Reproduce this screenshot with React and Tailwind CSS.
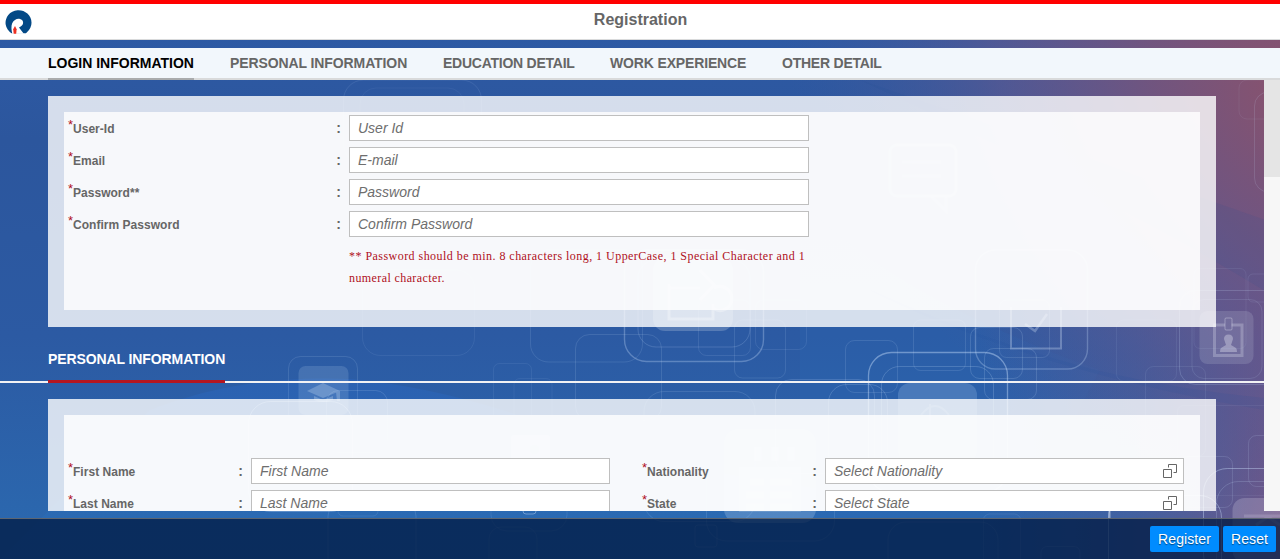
const tabs = [
  { name: 'LOGIN INFORMATION', width: 'w-[146px]' },
  { name: 'PERSONAL INFORMATION', width: 'w-[177px] tracking-[-0.1px]' },
  { name: 'EDUCATION DETAIL', width: 'w-[131px] tracking-[-0.25px]' },
  { name: 'WORK EXPERIENCE', width: 'w-[136px] tracking-[-0.15px]' },
  { name: 'OTHER DETAIL', width: 'w-[100px] tracking-[-0.23px]' },
];

const loginFields = [
  ['User-Id', 'User Id'],
  ['Email', 'E-mail'],
  ['Password**', 'Password'],
  ['Confirm Password', 'Confirm Password'],
];

function Box({ x, y, w, h, r = 10, o = 0.12, sw = 1 }) {
  return <rect x={x} y={y} width={w} height={h} rx={r} fill="none" stroke="#cfe4ff" strokeOpacity={o} strokeWidth={sw} />;
}

function Backdrop() {
  return (
    <svg className="absolute inset-0" width="1280" height="559" viewBox="0 0 1280 559" aria-hidden="true">
      <defs>
        <linearGradient id="base" x1="0" y1="0" x2="0" y2="1">
          <stop offset="0" stopColor="#2e5ba7" />
          <stop offset="0.25" stopColor="#2c569d" />
          <stop offset="0.6" stopColor="#2c5aa3" />
          <stop offset="0.93" stopColor="#2b67ae" />
          <stop offset="1" stopColor="#2b67ae" />
        </linearGradient>
        <radialGradient id="glow" gradientUnits="userSpaceOnUse" cx="0" cy="0" r="1" gradientTransform="translate(1310 90) rotate(28) scale(560 420)">
          <stop offset="0" stopColor="#8b526b" />
          <stop offset="0.3" stopColor="#75547c" stopOpacity="0.9" />
          <stop offset="0.6" stopColor="#5f588f" stopOpacity="0.65" />
          <stop offset="1" stopColor="#3f5a9c" stopOpacity="0" />
        </radialGradient>
        <linearGradient id="side" gradientUnits="userSpaceOnUse" x1="980" y1="0" x2="1290" y2="0">
          <stop offset="0" stopColor="#5a5a96" stopOpacity="0" />
          <stop offset="0.5" stopColor="#5a5a92" stopOpacity="0.5" />
          <stop offset="1" stopColor="#80547f" stopOpacity="0.9" />
        </linearGradient>
        <linearGradient id="wave" x1="0" y1="0" x2="0" y2="1">
          <stop offset="0" stopColor="#2b62b4" stopOpacity="0.85" />
          <stop offset="1" stopColor="#2b72ba" stopOpacity="0.3" />
        </linearGradient>
      </defs>
      <rect width="1280" height="559" fill="url(#base)" />
      <path d="M150 410Q240 374 350 379Q450 388 560 430T900 500L900 559L0 559Z" fill="url(#wave)" />
      <path d="M800 200Q900 300 1100 370L1000 559L800 559Z" fill="#2b68b4" fillOpacity="0.3" />
      <rect width="1280" height="559" fill="url(#side)" />
      <rect width="1280" height="559" fill="url(#glow)" />
      <path d="M860 80Q1050 145 1280 225L1280 300Q1100 190 860 80Z" fill="#1e4f98" fillOpacity="0.1" />
      <path d="M870 290Q980 340 1095 370Q1180 390 1264 398L1264 410Q1030 370 870 290Z" fill="#214f9c" fillOpacity="0.1" />

      <Box x="343.500" y="80" w="138" h="84" r="20" o="0.1" />
      <Box x="360" y="88" w="104" h="70" r="16" o="0.06" />
      <Box x="288.500" y="356.500" w="69" h="70" r="12" o="0.13" />
      <rect x="298.500" y="366" width="50" height="49" rx="7" fill="#a9c8e8" fillOpacity="0.2" />
      <path d="M307 391l16-8 17 8-17 7zM314 396v4q9 4 19 0v-4l-10 4zM336 392l4-1v10h-3z" fill="#cfe3f5" fillOpacity="0.28" />
      <Box x="248.500" y="401.500" w="104" h="110" r="22" o="0.3" />
      <Box x="326.500" y="390.500" w="61" h="62" r="12" o="0.15" />
      <Box x="362.500" y="270" w="112" h="85.500" r="18" o="0.08" />
      <Box x="530.500" y="250" w="112" h="112" r="18" o="0.12" />
      <Box x="575.500" y="334.500" w="86" h="86" r="14" o="0.13" />
      <Box x="624.500" y="250" w="139" h="111.500" r="22" o="0.3" sw={1.4} />
      <Box x="638" y="260" w="112" h="87" r="18" o="0.18" />
      <rect x="653" y="258" width="80" height="73" rx="12" fill="#fff" fillOpacity="0.2" />
      <path d="M669 284v35h44v-15M669 288h31M700 270l14 15-14 15M714 309a12 12 0 1 0 0-21" fill="none" stroke="#fff" strokeOpacity="0.3" strokeWidth="3" />
      <Box x="698.500" y="300" w="52" h="55.500" r="8" o="0.11" />
      <Box x="734.500" y="320" w="51" h="58" r="8" o="0.12" />
      <Box x="755.500" y="300" w="51" h="49.500" r="8" o="0.1" />
      <Box x="493.500" y="363.500" w="38" h="60" r="6" o="0.08" />
      <Box x="514" y="378.500" w="38" h="42" r="6" o="0.07" />
      <rect x="511" y="435" width="39" height="50" rx="2" fill="#fff" fillOpacity="0.25" />
      <circle cx="534.500" cy="449.500" r="4.500" fill="#2b62ae" fillOpacity="0.4" />
      <Box x="491" y="419" w="76" h="112" r="16" o="0.1" />
      <Box x="644" y="391.500" w="111" h="130" r="20" o="0.13" />
      <Box x="775.500" y="379.500" w="99" h="94" r="16" o="0.17" />
      <Box x="706.500" y="416" w="128" h="125" r="20" o="0.12" />
      <rect x="724" y="429" width="92" height="94" rx="14" fill="#c3ddf5" fillOpacity="0.25" />
      <path d="M739 467h62v45h-62z" fill="#fff" fillOpacity="0.14" />
      <path d="M750 482h14M770 482h22M746 495h18M770 495h22M746 507h18M770 507h22M758 447v14M775 447v14M791 447v14" stroke="#fff" strokeOpacity="0.2" strokeWidth="7" />
      <Box x="328" y="500" w="88" h="100" r="16" o="0.14" />
      <Box x="338" y="482" w="40" h="34" r="5" o="0.1" />
      <Box x="489" y="527" w="48" h="60" r="12" o="0.09" />
      <Box x="523" y="500" w="13" h="14" r="3" o="0.4" />
      <Box x="695" y="525" w="22" h="22" r="3" o="0.12" />

      <Box x="845.500" y="340.500" w="52" h="52" r="9" o="0.13" />
      <Box x="913.500" y="320" w="52" h="50.500" r="7" o="0.13" />
      <Box x="868.500" y="352.500" w="139" h="140" r="23" o="0.42" sw={1.3} />
      <Box x="881.500" y="366.500" w="112" h="114" r="18" o="0.2" />
      <Box x="828.500" y="384.500" w="59" h="90" r="18" o="0.19" />
      <rect x="898" y="383" width="79" height="80" rx="12" fill="#c5e2fa" fillOpacity="0.2" />
      <path d="M921 415q14-18 28 0M930 404v17" fill="none" stroke="#fff" strokeOpacity="0.15" strokeWidth="2" />
      <Box x="975.500" y="250" w="112" h="119" r="20" o="0.27" sw={1.4} />
      <Box x="970.500" y="327.500" w="52" h="51" r="9" o="0.16" />
      <Box x="984.500" y="348.500" w="52" h="51" r="9" o="0.16" />
      <Box x="999.500" y="300" w="50" h="57.500" r="7" o="0.13" />
      <path d="M1011 307v41.500h50V307" fill="none" stroke="#c9d9ef" strokeOpacity="0.34" strokeWidth="2" />
      <path d="M1025 324l10 7 12-17" fill="none" stroke="#c9d9ef" strokeOpacity="0.34" strokeWidth="2.500" />
      <rect x="890" y="145" width="66" height="51" rx="7" fill="none" stroke="#fff" strokeOpacity="0.2" strokeWidth="3" />
      <path d="M902 162h39M902 176h39M931 196l15 15v-15" stroke="#fff" strokeOpacity="0.14" strokeWidth="3" fill="none" />

      <rect x="1199.500" y="311" width="54" height="53" rx="8" fill="#ced1e5" fillOpacity="0.18" />
      <path d="M1225 325h-10.500v30.500h27.500V325h-10.500" fill="none" stroke="#dcddec" strokeOpacity="0.3" strokeWidth="3" />
      <rect x="1225" y="318" width="7" height="12" rx="1" fill="none" stroke="#dcddec" strokeOpacity="0.38" />
      <path d="M1224 339q0-4.500 4.500-4.500t4.500 4.500l-2 6 5 3q1 1 1 4h-17q0-3 1-4l5-3z" fill="#dcddec" fillOpacity="0.4" />
      <Box x="1179.500" y="290.500" w="110" h="94" r="16" o="0.19" />
      <Box x="1192" y="299.500" w="70" h="79" r="12" o="0.12" />
      <Box x="1145.500" y="366.500" w="60" h="90" r="8" o="0.09" />
      <Box x="1116.500" y="320" w="60" h="61" r="7" o="0.08" />
      <Box x="1239" y="80" w="52" h="39" r="8" o="0.07" />
      <Box x="1254.500" y="92" w="60" h="100" r="14" o="0.14" />
      <Box x="1194" y="268.500" w="52" h="80" r="6" o="0.08" />
      <Box x="1248" y="274" w="60" h="28" r="5" o="0.1" />
      <Box x="1177.500" y="405.500" w="100" h="90" r="6" o="0.07" />
      <Box x="1248.500" y="435.500" w="70" h="51" r="8" o="0.14" />
      <Box x="1180.500" y="456.500" w="52" h="51" r="8" o="0.14" />
      <Box x="1203.500" y="468.500" w="130" h="110" r="24" o="0.4" />
      <Box x="1216.500" y="481.500" w="130" h="110" r="22" o="0.18" />
      <Box x="1108.500" y="495.500" w="113" h="90" r="22" o="0.38" />
      <rect x="1232.500" y="498" width="65" height="65" rx="12" fill="#d2cfe4" fillOpacity="0.25" />
      <path d="M1244 516h36M1256 525l12-8 12 8" fill="none" stroke="#dcddec" strokeOpacity="0.2" strokeWidth="3" />
      <Box x="983.500" y="514" w="37" h="60" r="6" o="0.1" />
      <path d="M1109.500 511v8" stroke="#fff" strokeOpacity="0.45" strokeWidth="2" />
      <Box x="888" y="522" w="110" h="60" r="18" o="0.12" />
      <Box x="1041" y="546.500" w="39" h="30" r="6" o="0.12" />
    </svg>
  );
}

function Logo() {
  return (
    <svg className="block" width="29" height="26" viewBox="0 0 29 26" aria-label="Logo">
      <path d="M8.500 24.200A13 12.500 0 1 1 24.200 23L23 24.200Z" fill="#034986" />
      <path d="M9.300 24.800C8.400 21.500 8 17 9.200 14.300C10.800 10.900 14 9.300 17 10C20.300 10.800 21.100 14.400 18.900 16.600C18.200 17.400 17.300 17.900 16 18.500L20.800 24.800Z" fill="#fff" />
      <path d="M12 17L13.600 20.300L13.200 24.700H10.700L10.200 20.300Z" fill="#ed3022" />
    </svg>
  );
}

function ValueHelp() {
  return (
    <svg className="block shrink-0" width="15" height="15" viewBox="0 0 15 15" fill="none" stroke="#666" aria-hidden="true">
      <path d="M.500 5.500h8v8h-8zM5.500 3.500V.500h8v8H10.500" />
    </svg>
  );
}

function Field({ label, hint, labelWidth, inputWidth, help }) {
  return (
    <div className="flex h-8 items-center">
      <div className={`flex shrink-0 items-center justify-between pr-[8px] ${labelWidth}`}>
        <label className="flex pt-px text-[12px] leading-4 font-bold tracking-[0.03px] whitespace-nowrap text-[#666]">
          <span className="-mt-[4px] w-[5px] text-[13px] font-normal tracking-normal text-[#b0101c]">*</span>
          {label}
        </label>
        <span className="text-[14px] leading-4 font-bold text-[#666]">:</span>
      </div>
      <div className={`flex h-[26px] items-center border border-[#bfbfbf] bg-white pr-[5px] pl-2 ${inputWidth}`}>
        <input
          placeholder={hint}
          className="h-6 min-w-0 flex-1 bg-transparent text-[14px] text-[#333] outline-none placeholder:text-[#6e6e6e] placeholder:italic"
        />
        {help && <ValueHelp />}
      </div>
    </div>
  );
}

export default function App() {
  return (
    <div className="relative h-[559px] w-[1280px] overflow-hidden bg-[#2c589f] font-['Liberation_Sans',Arial,sans-serif]">
      <Backdrop />
      <div className="relative flex h-full flex-col">
        <header className="grid h-10 shrink-0 grid-cols-[1fr_auto_1fr] border-t-4 border-b border-t-[#ff0000] border-b-[#d9dadb] bg-white">
          <div className="pt-[5px] pl-[3px]"><Logo /></div>
          <h1 className="pt-[6px] pl-px text-[16px] leading-[20px] font-bold text-[#666]">Registration</h1>
        </header>

        <nav className="mt-2 flex h-8 shrink-0 gap-9 border-b-2 border-[#d9dadb] bg-[#f2f7fc] pl-12">
          {tabs.map((t, i) => (
            <button
              key={t.name}
              className={`-mb-0.5 h-8 shrink-0 border-b-2 text-left text-[14px] leading-[30px] font-bold whitespace-nowrap ${t.width} ${i === 0 ? 'border-[#a9abad] text-black' : 'border-transparent text-[#666]'}`}
            >
              {t.name}
            </button>
          ))}
        </nav>

        <div className="flex h-[431px] shrink-0 overflow-hidden">
          <main className="w-[1264px] pt-4">
            <section className="mr-12 ml-12 h-[231px] bg-white/80 px-4 pt-4 pb-[17px]">
              <div className="h-[198px] bg-white/80 pl-1">
                {loginFields.map(([label, hint]) => (
                  <Field key={label} label={label} hint={hint} labelWidth="w-[281px]" inputWidth="w-[460px]" />
                ))}
                <p className="mt-[5px] ml-[281px] w-[470px] font-['Liberation_Serif',serif] text-[12px] leading-[22px] whitespace-nowrap text-[#b0101c]">
                  <span className="tracking-[0.46px]">** Password should be min. 8 characters long, 1 UpperCase, 1 Special Character and 1</span>
                  <br />
                  <span className="tracking-[0.4px]">numeral character.</span>
                </p>
              </div>
            </section>

            <div className="mt-4 flex h-10 border-b-2 border-[#f2f2f4] pl-12">
              <h2 className="h-[40px] w-[177px] shrink-0 border-b-[3px] border-[#b51620] text-[14px] leading-[32px] font-bold tracking-[-0.1px] whitespace-nowrap text-white">
                PERSONAL INFORMATION
              </h2>
            </div>

            <section className="mx-12 mt-4 h-[240px] bg-white/80 px-4 pt-4">
              <div className="flex h-[224px] gap-8 bg-white/80 pt-10 pl-1">
                <div>
                  <Field label="First Name" hint="First Name" labelWidth="w-[183px]" inputWidth="w-[359px]" />
                  <Field label="Last Name" hint="Last Name" labelWidth="w-[183px]" inputWidth="w-[359px]" />
                </div>
                <div>
                  <Field label="Nationality" hint="Select Nationality" labelWidth="w-[183px]" inputWidth="w-[359px]" help />
                  <Field label="State" hint="Select State" labelWidth="w-[183px]" inputWidth="w-[359px]" help />
                </div>
              </div>
            </section>
          </main>
          <div className="h-full w-4 bg-[#f7f7f7]">
            <div className="h-[97px] bg-[#e5e5e5]" />
          </div>
        </div>

        <footer className="mt-[7px] flex h-[41px] shrink-0 justify-end gap-1 border-t border-[#5d6570] bg-[rgba(0,24,64,0.75)] pt-[7px] pr-1">
          <button className="h-[26px] w-[69px] rounded-[2px] bg-[#008cff] text-[14px] leading-[26px] tracking-[0.1px] text-white [text-shadow:0_1px_1px_rgba(0,0,0,0.5)]">Register</button>
          <button className="h-[26px] w-[53px] rounded-[2px] bg-[#008cff] text-[14px] leading-[26px] tracking-[0.1px] text-white [text-shadow:0_1px_1px_rgba(0,0,0,0.5)]">Reset</button>
        </footer>
      </div>
    </div>
  );
}
